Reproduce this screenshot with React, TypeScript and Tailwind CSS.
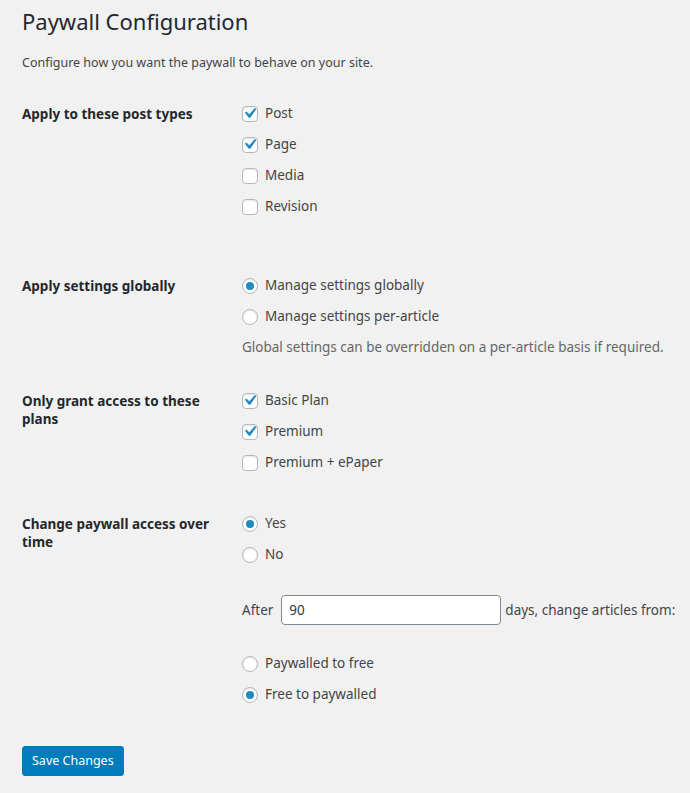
import React, { useState } from 'react'

const font = { fontFamily: '"Noto Sans", "Open Sans", sans-serif' }

const Checkbox = ({ checked, label, onChange }: { checked: boolean; label: string; onChange: () => void }) => (
  <label className="h-[31px] flex items-center cursor-pointer" onClick={onChange}>
    <span className="w-4 h-4 mr-[7px] bg-white border border-[#b4b9be] rounded-[4px] shadow-[inset_0_1px_2px_rgba(0,0,0,0.1)] flex items-center justify-center overflow-visible">
      {checked && (
        <svg width="20" height="20" viewBox="0 0 20 20" className="shrink-0 -mt-[1px]">
          <path d="M14.83 4.89l1.54 1.08-6.1 8.8H8.85L4.9 9.86l1.48-1.38 2.9 2.7z" fill="#1e8cbe" />
        </svg>
      )}
    </span>
    <span className="text-[13.5px] text-[#444]">{label}</span>
  </label>
)

const Radio = ({ checked, label, onChange }: { checked: boolean; label: string; onChange: () => void }) => (
  <label className="h-[31px] flex items-center cursor-pointer" onClick={onChange}>
    <span className="w-4 h-4 mr-[7px] bg-white border border-[#b4b9be] rounded-full shadow-[inset_0_1px_2px_rgba(0,0,0,0.1)] flex items-center justify-center">
      {checked && <span className="w-2 h-2 rounded-full bg-[#1e8cbe]" />}
    </span>
    <span className="text-[13.5px] text-[#444]">{label}</span>
  </label>
)

const Row = ({ label, children, className = '' }: { label: string; children: React.ReactNode; className?: string }) => (
  <div className={`flex items-start ${className}`}>
    <div className="w-[220px] shrink-0 pt-[7px] pr-[20px] text-[13.5px] leading-[18px] font-bold text-[#23282d]">{label}</div>
    <div className="flex flex-col">{children}</div>
  </div>
)

const App = () => {
  const [types, setTypes] = useState({ Post: true, Page: true, Media: false, Revision: false })
  const [globally, setGlobally] = useState(true)
  const [plans, setPlans] = useState({ 'Basic Plan': true, Premium: true, 'Premium + ePaper': false })
  const [overTime, setOverTime] = useState(true)
  const [days, setDays] = useState('90')
  const [direction, setDirection] = useState('free-to-paywalled')

  return (
    <div className="min-h-[793px] bg-[#f1f1f1] pl-[22px] pr-[10px]" style={font}>
      <h1 className="pt-[7px] text-[22px] leading-[29px] font-normal text-[#23282d]">Paywall Configuration</h1>
      <p className="mt-[17px] text-[12.5px] leading-[19px] text-[#444]">
        Configure how you want the paywall to behave on your site.
      </p>

      <Row label="Apply to these post types" className="mt-[26px]">
        {Object.entries(types).map(([name, on]) => (
          <Checkbox key={name} label={name} checked={on} onChange={() => setTypes({ ...types, [name]: !on })} />
        ))}
      </Row>

      <Row label="Apply settings globally" className="mt-[48px]">
        <Radio label="Manage settings globally" checked={globally} onChange={() => setGlobally(true)} />
        <Radio label="Manage settings per-article" checked={!globally} onChange={() => setGlobally(false)} />
        <p className="mt-[6px] text-[13.5px] leading-[19px] text-[#666]">
          Global settings can be overridden on a per-article basis if required.
        </p>
      </Row>

      <Row label="Only grant access to these plans" className="mt-[28px]">
        {Object.entries(plans).map(([name, on]) => (
          <Checkbox key={name} label={name} checked={on} onChange={() => setPlans({ ...plans, [name]: !on })} />
        ))}
      </Row>

      <Row label="Change paywall access over time" className="mt-[30px]">
        <Radio label="Yes" checked={overTime} onChange={() => setOverTime(true)} />
        <Radio label="No" checked={!overTime} onChange={() => setOverTime(false)} />
        <div className="mt-[25px] flex items-center text-[13.5px] text-[#444]">
          <span>After</span>
          <input
            value={days}
            onChange={(e) => setDays(e.target.value)}
            className="ml-[8px] mr-[4px] w-[220px] h-[30px] px-[7px] bg-white border border-[#7e8993] rounded-[4px] text-[13.5px] text-[#32373c] outline-none"
          />
          <span>days, change articles from:</span>
        </div>
        <div className="mt-[23px]">
          <Radio
            label="Paywalled to free"
            checked={direction === 'paywalled-to-free'}
            onChange={() => setDirection('paywalled-to-free')}
          />
          <Radio
            label="Free to paywalled"
            checked={direction === 'free-to-paywalled'}
            onChange={() => setDirection('free-to-paywalled')}
          />
        </div>
      </Row>

      <button className="mt-[36px] h-[30px] px-[9px] bg-[#007cba] border border-[#007cba] rounded-[3px] text-[12.5px] text-white leading-[28px]">
        Save Changes
      </button>
    </div>
  )
}

export default App
